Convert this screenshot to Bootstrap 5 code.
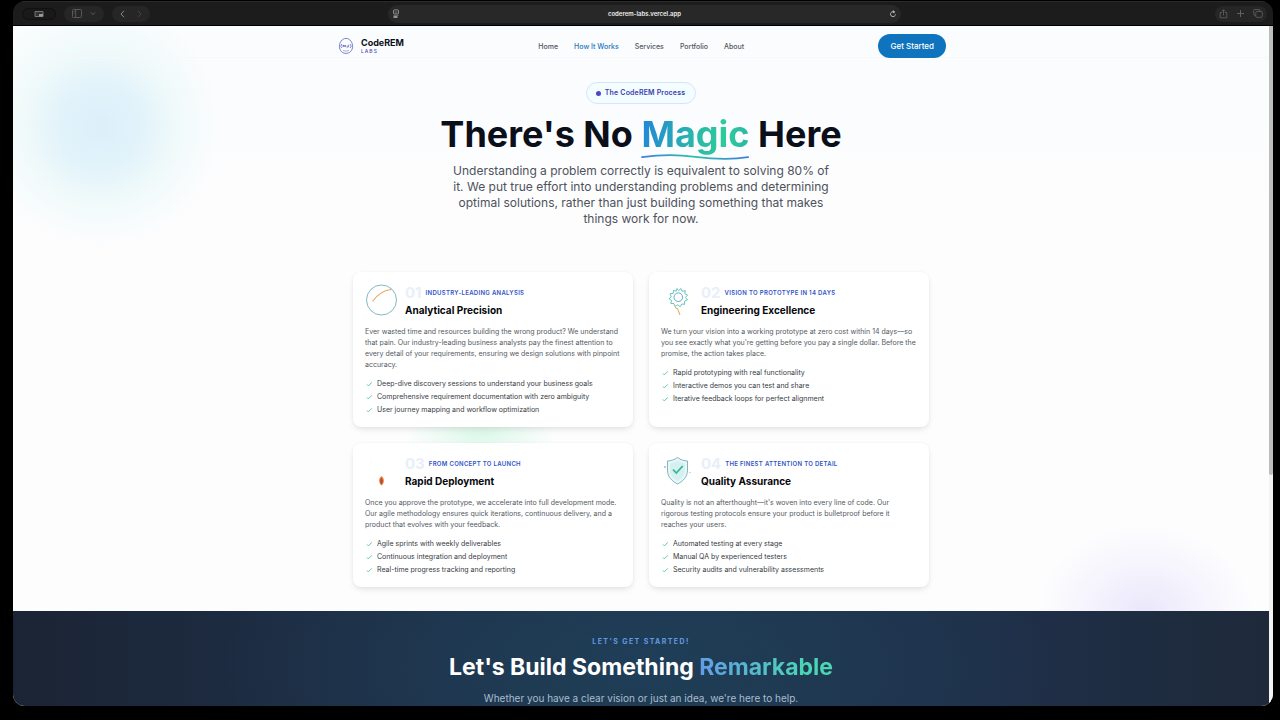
<!DOCTYPE html>
<html lang="en">
<head>
<meta charset="utf-8">
<meta name="viewport" content="width=device-width, initial-scale=1">
<title>CodeREM Labs – How It Works</title>
<link href="https://cdn.jsdelivr.net/npm/bootstrap@5.3.0/dist/css/bootstrap.min.css" rel="stylesheet">
<style>
  body { background: #000; font-family: Inter, "Liberation Sans", sans-serif; color: #0b0f1a; }
  svg { display: block; flex: none; }
  .browser { height: 100vh; padding: 1px 7px 14px 13px; }
  .browser-window { border-radius: 12px; background: #1c1c1c; }

  .toolbar { height: 25px; border-top: 1px solid #2b2b2b; border-bottom: 1px solid #000; padding: 0 6px 0 9px; color: #666; }
  .tool-side { flex: 1 1 0; }
  .tool-group { height: 16px; border-radius: 8px; background: #262626; padding: 0 8px; gap: 8px; }
  .tool-group.tab-tool { background: #191919; border: 1px solid #111; height: 12px; padding: 0 11px; }
  .tool-group.history { gap: 12px; }
  .tool-group.actions { padding: 0 4px; }
  .tool-btn { border: 0; background: none; padding: 0; color: inherit; }
  .address { flex: 0 1 513px; height: 18px; border-radius: 9px; background: #282828; padding: 0 4px; color: #ccc; }
  .address input { border: 0; background: none; color: #eee; font-size: 6px; line-height: 10px; font-weight: 600; text-align: center; padding: 0; min-width: 0; outline: 0; }

  .page { background: #fdfdfe; }
  .scroll-track { width: 4px; background: #f3f3f3; border-radius: 0 0 12px 0; }
  .scroll-thumb { height: 66%; background: #bdbdbd; border-radius: 0 0 3px 3px; }

  .intro {
    background:
      radial-gradient(circle at 87px 100px, #dceffa 0, #e2f3fa 42px, #edf9f9c0 78px, #fdfdfe00 122px),
      radial-gradient(ellipse 108px 86px at calc(100% - 124px) 100%, #ebe7fb 0, #f2effca0 55%, #fdfdfe00 100%),
      radial-gradient(ellipse 76px 30px at calc(50% - 160px) 407px, #dbf8e9 0, #fdfdfe00 100%),
      linear-gradient(#fafcfd, #fdfdfe 180px);
  }
  .site-nav { border-bottom: 1px solid #f6f8f9; height: 32px; padding-top: 8px; }
  .nav-shell { max-width: 610px; padding-left: 1px; }
  .brand { gap: 6px; color: #0b0f1a; text-decoration: none; }
  .brand-name { font-size: 9px; line-height: 10px; font-weight: 700; }
  .brand-sub { font-size: 5px; line-height: 7px; letter-spacing: 1px; font-weight: 500; color: #4a49c5; }
  .menu { gap: 16px; font-size: 7px; line-height: 14px; font-weight: 500; padding-top: 1px; }
  .menu a { color: #52565e; text-decoration: none; }
  .menu a.current { color: #2577bf; }
  .cta-btn { background: #0f74bd; color: #fff; font-size: 8px; line-height: 12px; font-weight: 500; padding: 6px 12px; border: 0; border-radius: 12px; }
  .cta-btn:hover { background: #0b639f; color: #fff; }

  .hero-copy { padding-top: 24px; }
  .pill { gap: 4px; border: 1px solid #d6e6fa; border-radius: 11px; background: #f3fcff; color: #3a3fb0; font-size: 7px; line-height: 12px; font-weight: 600; letter-spacing: .025em; padding: 4px 10px 4px 9px; }
  .pill-dot { width: 5px; height: 5px; border-radius: 50%; background: #4a49c5; }
  .hero-title { font-size: 36px; line-height: 40px; font-weight: 700; margin: 8px 0 9px; }
  .magic { position: relative; display: inline-block; }
  .magic-text { background: linear-gradient(100deg, #2383dc, #29b8a8 50%, #2ecb9b 75%, #2bb4a8); -webkit-background-clip: text; background-clip: text; color: transparent; }
  .magic svg { position: absolute; left: 0; top: 39px; width: 100%; height: 8px; }
  .hero-text { max-width: 384px; font-size: 12px; line-height: 16px; color: #4d525b; margin: 0 auto; }

  .steps { max-width: 576px; margin-top: 45px; padding-bottom: 24px; }
  .steps .row { --bs-gutter-x: 16px; --bs-gutter-y: 16px; }
  .step-card { background: #fff; border-radius: 8px; padding: 12px; box-shadow: 0 3px 6px -1px #0000001c, 0 0 3px #0000000a; }
  .step-head { gap: 8px; margin-bottom: 7px; }
  .step-num { font-size: 15px; line-height: 18px; font-weight: 700; color: #e8eff8; }
  .step-tag { font-size: 6px; line-height: 18px; font-weight: 600; letter-spacing: .05em; color: #2f55c8; text-transform: uppercase; }
  .step-title { font-size: 10px; line-height: 17px; font-weight: 700; margin: 0; color: #05070c; }
  .step-text { font-size: 7px; line-height: 11px; color: #545962; margin: 0 0 8px; }
  .step-list { font-size: 7px; line-height: 11px; color: #363b44; gap: 2px; }
  .step-list li { gap: 4px; }

  .closing { color: #fff; padding: 25px 0 40px;
    background: radial-gradient(ellipse 420px 160px at 50% 40%, #1f3e57, #1f3e5700), linear-gradient(90deg, #1b2434, #1d2c42 20%, #20354f 50%, #1f2f49 78%, #1e2a3a); }
  .eyebrow { font-size: 7px; line-height: 12px; font-weight: 700; letter-spacing: .2em; color: #6399e0; text-transform: uppercase; margin: 0; }
  .closing h2 { font-size: 23px; line-height: 32px; font-weight: 700; margin: 3px 0 8px; }
  .remark { background: linear-gradient(90deg, #639de8, #4ad6b4 80%); -webkit-background-clip: text; background-clip: text; color: transparent; }
  .closing-text { font-size: 10px; line-height: 14px; color: #a9bccd; margin: 0; }
</style>
</head>
<body>
<svg width="0" height="0" class="position-absolute" aria-hidden="true">
  <symbol id="tick" viewBox="0 0 8 8"><path d="M1.800 4.400 3.300 5.900 6.900 2.300" fill="none" stroke="#4fc49a" stroke-width=".9"/></symbol>
</svg>
<div class="browser">
<div class="browser-window h-100 d-flex flex-column overflow-hidden">

  <div class="toolbar d-flex align-items-center justify-content-between flex-shrink-0">
    <div class="tool-side d-flex align-items-center">
      <div class="tool-group tab-tool d-flex align-items-center me-2">
        <button class="tool-btn" aria-label="Tab overview"><svg width="10" height="8" viewBox="0 0 10 8"><path d="M1 1.500h8v5H1z" fill="#333" stroke="#888" stroke-width=".8"/><path d="M5 4h4v2.500H5z" fill="#999"/></svg></button>
      </div>
      <div class="tool-group d-flex align-items-center me-2">
        <button class="tool-btn" aria-label="Sidebar"><svg width="10" height="9" viewBox="0 0 10 9" fill="none" stroke="currentColor" stroke-width=".8"><rect x=".5" y=".5" width="9" height="8" rx="1"/><path d="M3.700.5v8M1.600 2.500h1M1.600 4h1"/></svg></button>
        <button class="tool-btn" aria-label="Tab groups"><svg width="6" height="5" viewBox="0 0 6 5"><path d="m.7 1.300 2.300 2.200 2.300-2.200" fill="none" stroke="currentColor" stroke-width=".8"/></svg></button>
      </div>
      <div class="tool-group history d-flex align-items-center">
        <button class="tool-btn" aria-label="Back"><svg width="5" height="8" viewBox="0 0 5 8"><path d="M4 .8 1 4l3 3.200" fill="none" stroke="#888"/></svg></button>
        <button class="tool-btn" aria-label="Forward"><svg width="5" height="8" viewBox="0 0 5 8"><path d="m1 .8 3 3.200-3 3.200" fill="none" stroke="#444"/></svg></button>
      </div>
    </div>
    <div class="address d-flex align-items-center">
      <svg width="8" height="9" viewBox="0 0 8 9"><rect x="1.500" y=".9" width="5" height="4" rx=".8" fill="none" stroke="#aaa" stroke-width=".8"/><path d="M2.500 3h3M1.500 6.300h5" stroke="#999" stroke-width=".7"/><path d="M1.500 8h4" stroke="#fff"/></svg>
      <input class="flex-grow-1" type="text" aria-label="Address" value="coderem-labs.vercel.app">
      <button class="tool-btn" aria-label="Reload"><svg width="8" height="8" viewBox="0 0 8 8"><path d="M6 2.600A2.500 2.500 0 1 0 6.500 4.400M3.800.4l1.600 1.400L3.900 3.100" fill="none" stroke="currentColor" stroke-width=".9"/></svg></button>
    </div>
    <div class="tool-side d-flex justify-content-end">
      <div class="tool-group actions d-flex align-items-center">
        <button class="tool-btn" aria-label="Share"><svg width="9" height="10" viewBox="0 0 9 10" fill="none" stroke="currentColor" stroke-width=".8"><path d="M3 3.500H1.200v5.300h6.600V3.500H6M4.500 6.300V.8M2.900 2.300 4.500.7l1.600 1.600"/></svg></button>
        <button class="tool-btn" aria-label="New tab"><svg width="9" height="9" viewBox="0 0 9 9"><path d="M4.500 1v7M1 4.500h7" stroke="currentColor" stroke-width=".9"/></svg></button>
        <button class="tool-btn" aria-label="Show tabs"><svg width="10" height="9" viewBox="0 0 10 9" fill="none" stroke="currentColor" stroke-width=".8"><rect x="2.800" y="2.500" width="6.500" height="5.800" rx="1"/><path d="M2.800 6.300H1.700a1 1 0 0 1-1-1V1.500a1 1 0 0 1 1-1H6a1 1 0 0 1 1 1v1"/></svg></button>
      </div>
    </div>
  </div>

  <div class="d-flex flex-grow-1 overflow-hidden page">
    <div class="flex-grow-1 overflow-hidden">
      <div class="intro">
        <header class="site-nav">
          <nav class="nav-shell mx-auto d-flex align-items-center justify-content-between">
            <a href="#" class="brand d-flex align-items-center">
              <svg width="18" height="18" viewBox="0 0 18 18" fill="none" stroke="#5a64bb"><path d="M9 1.400c4 0 6.600 4.200 6.600 8 0 4-2.800 7-6.600 7s-6.600-3-6.600-7c0-3.800 2.600-8 6.600-8z" stroke-width=".8"/><path d="M5 7 3.700 9.300 5 11M13 7l1.300 2.300L13 11" stroke-width=".8"/><path d="M6.200 10V8l1.100 1.500L8.300 8v2M9.500 10h1.800V7.800" stroke-width=".9"/><path d="M6 13.500q3 1.300 6 0" stroke-width=".5"/></svg>
              <span class="d-flex flex-column"><span class="brand-name">CodeREM</span><span class="brand-sub">LABS</span></span>
            </a>
            <div class="menu d-flex">
              <a href="#">Home</a><a href="#" class="current">How It Works</a><a href="#">Services</a><a href="#">Portfolio</a><a href="#">About</a>
            </div>
            <button class="btn cta-btn">Get Started</button>
          </nav>
        </header>

        <section class="hero-copy text-center">
          <div class="pill d-inline-flex align-items-center align-top"><span class="pill-dot"></span>The CodeREM Process</div>
          <h1 class="hero-title">There's No <span class="magic"><span class="magic-text">Magic</span><svg viewBox="0 0 108 8" preserveAspectRatio="none" aria-hidden="true"><defs><linearGradient id="wave"><stop stop-color="#3d7fe0"/><stop offset=".5" stop-color="#2fc0a4"/><stop offset="1" stop-color="#3d7fe0"/></linearGradient></defs><path d="M1 4.200C18 1.800 36 1.500 54 3.800S88 7.200 107 4.200" fill="none" stroke="url(#wave)" stroke-width="1.800" stroke-linecap="round"/></svg></span> Here</h1>
          <p class="hero-text">Understanding a problem correctly is equivalent to solving 80% of it. We put true effort into understanding problems and determining optimal solutions, rather than just building something that makes things work for now.</p>
        </section>

        <section class="steps mx-auto">
          <div class="row row-cols-2">
            <div class="col"><article class="step-card h-100">
              <div class="step-head d-flex">
                <svg width="32" height="32" viewBox="0 0 32 32" fill="none"><circle cx="16.500" cy="16" r="15" stroke="#5fa6b0" stroke-width=".8"/><path d="M7.500 17.500C12 11 19 6 26.500 5.500" stroke="#e8a860" stroke-width="1.100"/></svg>
                <div><div class="d-flex gap-1"><span class="step-num">01</span><span class="step-tag">Industry-Leading Analysis</span></div><h3 class="step-title">Analytical Precision</h3></div>
              </div>
              <p class="step-text">Ever wasted time and resources building the wrong product? We understand that pain. Our industry-leading business analysts pay the finest attention to every detail of your requirements, ensuring we design solutions with pinpoint accuracy.</p>
              <ul class="step-list list-unstyled d-flex flex-column mb-0">
                <li class="d-flex align-items-center"><svg width="8" height="8"><use href="#tick"/></svg>Deep-dive discovery sessions to understand your business goals</li>
                <li class="d-flex align-items-center"><svg width="8" height="8"><use href="#tick"/></svg>Comprehensive requirement documentation with zero ambiguity</li>
                <li class="d-flex align-items-center"><svg width="8" height="8"><use href="#tick"/></svg>User journey mapping and workflow optimization</li>
              </ul>
            </article></div>
            <div class="col"><article class="step-card h-100">
              <div class="step-head d-flex">
                <svg width="32" height="32" viewBox="0 0 32 32" fill="none"><path d="m16 4.500 1.500 2.200L20 4.500l1 2.800 3.300-.6-.5 3 2.700 1.300-2 2.500 2 2.400-3 1.300.2 3.100-3-.3-1.500 2.700-2.500-2-2.600 1.800-1.200-2.900-3.200-.2.900-3L8 14.700l2.300-2L9 9.800l3.200-.4.300-3 2.700.8z" stroke="#4ab5a8" stroke-width=".8"/><circle cx="17.300" cy="13.200" r="4.300" stroke="#529fce" stroke-width=".9"/><path d="m14 22.500 1.500 2h1L19 31" stroke="#dfb56a" stroke-width="1.100"/></svg>
                <div><div class="d-flex gap-1"><span class="step-num">02</span><span class="step-tag">Vision to Prototype in 14 Days</span></div><h3 class="step-title">Engineering Excellence</h3></div>
              </div>
              <p class="step-text">We turn your vision into a working prototype at zero cost within 14 days—so you see exactly what you're getting before you pay a single dollar. Before the promise, the action takes place.</p>
              <ul class="step-list list-unstyled d-flex flex-column mb-0">
                <li class="d-flex align-items-center"><svg width="8" height="8"><use href="#tick"/></svg>Rapid prototyping with real functionality</li>
                <li class="d-flex align-items-center"><svg width="8" height="8"><use href="#tick"/></svg>Interactive demos you can test and share</li>
                <li class="d-flex align-items-center"><svg width="8" height="8"><use href="#tick"/></svg>Iterative feedback loops for perfect alignment</li>
              </ul>
            </article></div>
            <div class="col"><article class="step-card h-100">
              <div class="step-head d-flex">
                <svg width="32" height="32" viewBox="0 0 32 32" fill="none"><path d="M16.500 21c3.200 2 3.200 7 0 9.500-3.200-2.500-3.200-7.500 0-9.500z" fill="#e58a4e"/><path d="M16.500 22.500c1.800 2 1.800 5 0 7.200-1.800-2.200-1.800-5.200 0-7.200z" fill="#b9482c"/><circle cx="6" cy="7" r=".5" fill="#d8e4f0"/></svg>
                <div><div class="d-flex gap-1"><span class="step-num">03</span><span class="step-tag">From Concept to Launch</span></div><h3 class="step-title">Rapid Deployment</h3></div>
              </div>
              <p class="step-text">Once you approve the prototype, we accelerate into full development mode. Our agile methodology ensures quick iterations, continuous delivery, and a product that evolves with your feedback.</p>
              <ul class="step-list list-unstyled d-flex flex-column mb-0">
                <li class="d-flex align-items-center"><svg width="8" height="8"><use href="#tick"/></svg>Agile sprints with weekly deliverables</li>
                <li class="d-flex align-items-center"><svg width="8" height="8"><use href="#tick"/></svg>Continuous integration and deployment</li>
                <li class="d-flex align-items-center"><svg width="8" height="8"><use href="#tick"/></svg>Real-time progress tracking and reporting</li>
              </ul>
            </article></div>
            <div class="col"><article class="step-card h-100">
              <div class="step-head d-flex">
                <svg width="32" height="32" viewBox="0 0 32 32" fill="none"><path d="M16.500 2.500c3 2.300 6.500 3.300 10 3.500v9c0 6.500-4 11-10 14-6-3-10-7.500-10-14V6c3.500-.2 7-1.200 10-3.500z" fill="#e8f7f8" stroke="#6b9fae" stroke-width=".8"/><path d="M16.500 5.500c2.500 1.600 4.700 2.400 7.500 2.800v6.700c0 5-3 8.500-7.500 11C12 23.500 9 20 9 15V8.300c2.800-.4 5-1.200 7.500-2.800z" fill="#d5f1ef"/><path d="m12 14.500 3.300 3.500 6.400-7" stroke="#38b592" stroke-width="1.800"/><circle cx="4" cy="12" r=".9" fill="#8fb8cf"/><circle cx="29" cy="17.500" r=".8" fill="#a8d8cb"/></svg>
                <div><div class="d-flex gap-1"><span class="step-num">04</span><span class="step-tag">The Finest Attention to Detail</span></div><h3 class="step-title">Quality Assurance</h3></div>
              </div>
              <p class="step-text">Quality is not an afterthought—it's woven into every line of code. Our rigorous testing protocols ensure your product is bulletproof before it reaches your users.</p>
              <ul class="step-list list-unstyled d-flex flex-column mb-0">
                <li class="d-flex align-items-center"><svg width="8" height="8"><use href="#tick"/></svg>Automated testing at every stage</li>
                <li class="d-flex align-items-center"><svg width="8" height="8"><use href="#tick"/></svg>Manual QA by experienced testers</li>
                <li class="d-flex align-items-center"><svg width="8" height="8"><use href="#tick"/></svg>Security audits and vulnerability assessments</li>
              </ul>
            </article></div>
          </div>
        </section>
      </div>

      <section class="closing text-center">
        <p class="eyebrow">Let's Get Started!</p>
        <h2>Let's Build Something <span class="remark">Remarkable</span></h2>
        <p class="closing-text">Whether you have a clear vision or just an idea, we're here to help.</p>
      </section>
    </div>
    <div class="scroll-track flex-shrink-0"><div class="scroll-thumb"></div></div>
  </div>
</div>
</div>
<script src="https://cdn.jsdelivr.net/npm/bootstrap@5.3.0/dist/js/bootstrap.bundle.min.js"></script>
</body>
</html>
